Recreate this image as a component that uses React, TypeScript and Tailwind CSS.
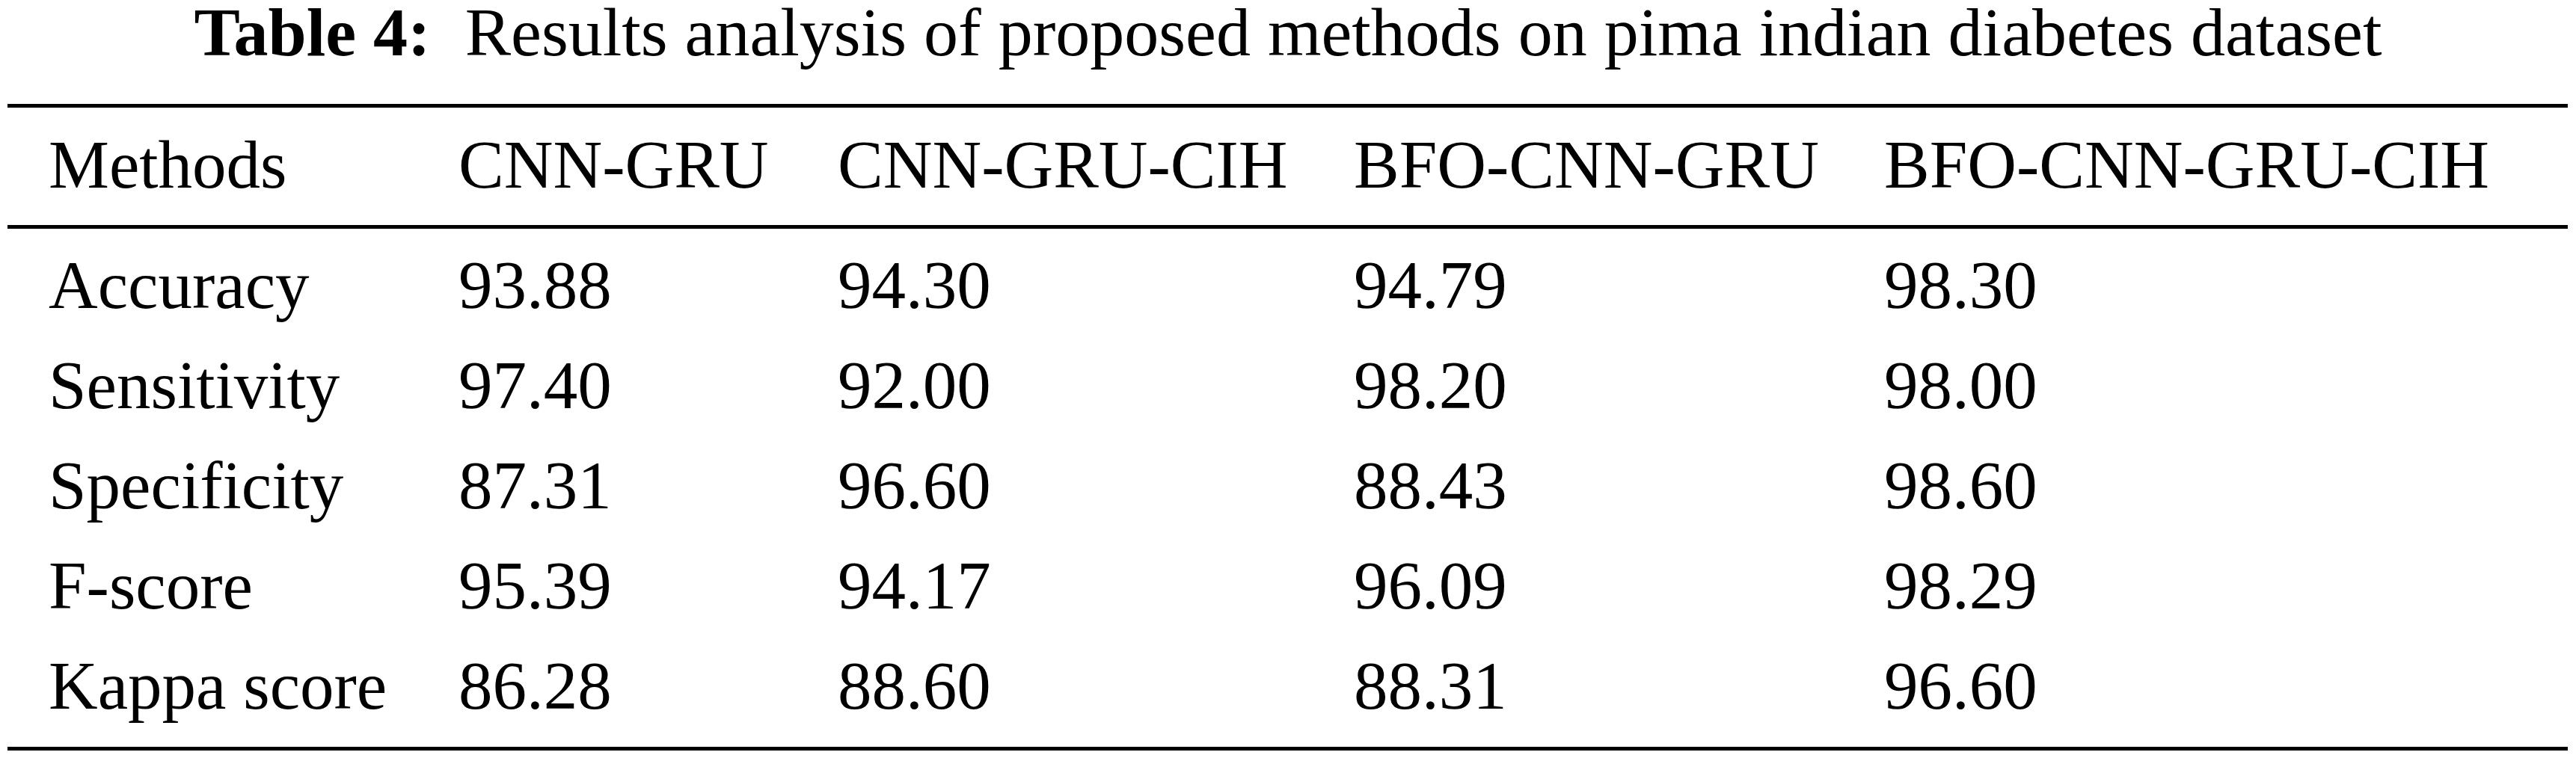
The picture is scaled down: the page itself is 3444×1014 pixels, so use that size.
import React from "react";

const headers = ["Methods", "CNN-GRU", "CNN-GRU-CIH", "BFO-CNN-GRU", "BFO-CNN-GRU-CIH"];

const rows = [
  ["Accuracy", "93.88", "94.30", "94.79", "98.30"],
  ["Sensitivity", "97.40", "92.00", "98.20", "98.00"],
  ["Specificity", "87.31", "96.60", "88.43", "98.60"],
  ["F-score", "95.39", "94.17", "96.09", "98.29"],
  ["Kappa score", "86.28", "88.60", "88.31", "96.60"],
];

const cols = "grid grid-cols-[548px_507px_690px_709px_1fr]";

const App = () => {
  return (
    <div
      className="w-[3444px] h-[1014px] bg-white text-black overflow-hidden"
      style={{ fontFamily: '"Liberation Serif", "Times New Roman", serif' }}
    >
      <div className="h-[139px] flex justify-center">
        <p className="text-[92px] leading-[86px] whitespace-pre">
          <b className="font-bold">Table 4:</b>  Results analysis of proposed methods on pima indian diabetes dataset
        </p>
      </div>
      <div className="ml-[10px] mr-[11px]">
        <div className="h-[5px] bg-black"></div>
        <div className={`${cols} h-[157px] pb-[4px] items-center`}>
          {headers.map((h, i) => (
            <div key={`h-${i}`} className="pl-[55px] text-[91px] leading-none whitespace-nowrap">
              {h}
            </div>
          ))}
        </div>
        <div className="h-[5px] bg-black"></div>
        <div className="pt-[8px] pb-[15px]">
          {rows.map((r, ri) => (
            <div key={`r-${ri}`} className={`${cols} h-[134px] items-center`}>
              {r.map((c, ci) => (
                <div key={`c-${ri}-${ci}`} className="pl-[55px] text-[91px] leading-none whitespace-nowrap">
                  {c}
                </div>
              ))}
            </div>
          ))}
        </div>
        <div className="h-[5px] bg-black"></div>
      </div>
    </div>
  );
};

export default App;
